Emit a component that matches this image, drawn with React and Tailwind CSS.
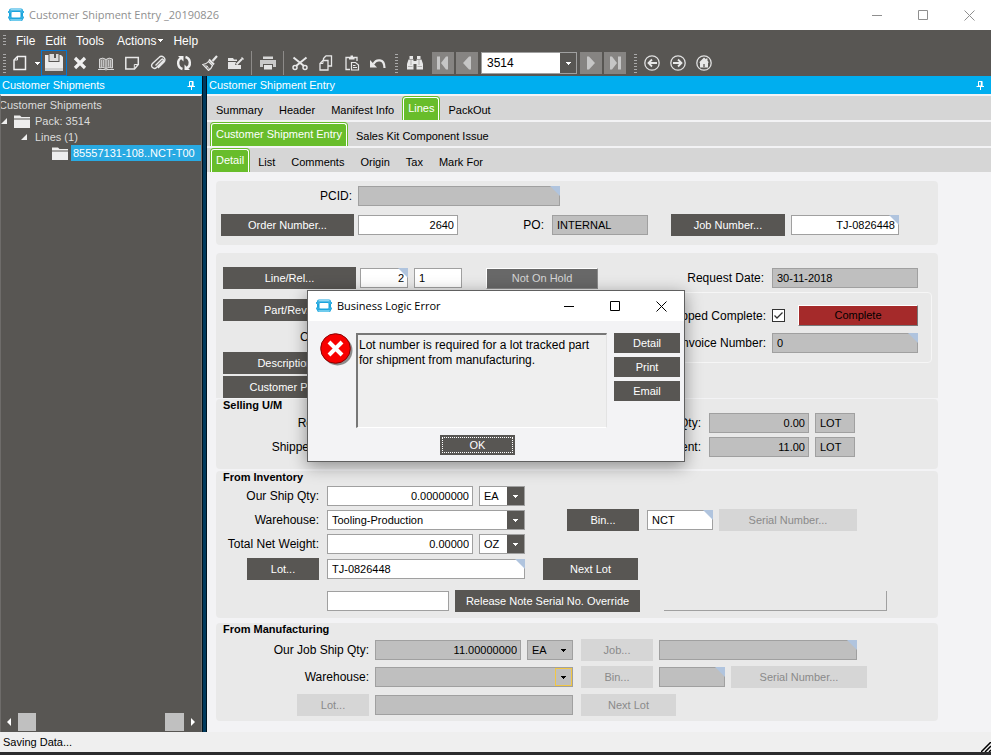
import { useState } from "react"

const topTabs = ["Summary", "Header", "Manifest Info", "Lines", "PackOut"]
const lineTabs = ["Customer Shipment Entry", "Sales Kit Component Issue"]
const detailTabs = ["Detail", "List", "Comments", "Origin", "Tax", "Mark For"]

/* ---------- icons ---------- */

function Svg({ size = 16, className = "", children }) {
  return (
    <svg width={size} height={size} viewBox={`0 0 ${size} ${size}`} fill="none" className={className} aria-hidden="true">
      {children}
    </svg>
  )
}

function AppLogo() {
  return (
    <Svg className="shrink-0">
      <rect x="1" y="1.500" width="14" height="12.500" rx="2" fill="#1ba4dd" />
      <path d="M3 1.500h10l1 2H2z" fill="#8fd6f2" />
      <path d="M3 14h10l1-2H2z" fill="#6fcbed" />
      <path d="M0 4h4v2H0zM12 4h4v2h-4zM0 9.500h4v2H0zM12 9.500h4v2h-4z" fill="#35b0e2" />
      <rect x="3.500" y="5" width="9" height="5.500" rx="1" fill="#fff" />
    </Svg>
  )
}

const Minimize = () => <Svg size={11}><path d="M0 5.500h10" stroke="currentColor" /></Svg>
const Maximize = () => <Svg size={11}><path d="M.5.5h9v9h-9z" stroke="currentColor" /></Svg>
const CloseX = () => <Svg size={11}><path d="M.5.5l10 10M10.500.5l-10 10" stroke="currentColor" /></Svg>
const Pin = () => (
  <Svg size={9}>
    <path d="M2.500.5h3.500v4.500h-3.500zM.5 5.500h7.500M4.500 6v3" stroke="#fff" />
    <path d="M5.500 0v5" stroke="#fff" strokeWidth="1.500" />
  </Svg>
)
const Caret = ({ className = "" }) => (
  <svg width="5" height="3" viewBox="0 0 5 3" shapeRendering="crispEdges" className={className} aria-hidden="true">
    <path d="M0 0h5v1H4v1H3v1H2V2H1V1H0z" fill="currentColor" />
  </svg>
)

const NewDoc = () => <Svg><path d="M5.500 1.500h8v13H2V5z" stroke="#f0f0f0" strokeWidth="1.500" /><path d="M2 5h3.500V1.500" stroke="#f0f0f0" /></Svg>
const Save = () => (
  <Svg size={18}>
    <path d="M0 1h3.500v7h11V1H16l2 2v14H0z" fill="#ececec" />
    <path d="M4.500 0h9v7h-9z" fill="#dcdcdc" />
    <path d="M9 0h2v4H9z" fill="#585653" />
    <path d="M0 14h18v3H0z" fill="#cfcfcf" />
  </Svg>
)
const Delete = () => <Svg><path d="M3 3l10 10M13 3L3 13" stroke="#f0f0f0" strokeWidth="3.200" /></Svg>
const Book = () => (
  <Svg>
    <path d="M1.500 4Q5 2 8 4.500 11 2 14.500 4v9Q11 11.500 8 13.500 5 11.500 1.500 13z" fill="#8d8b89" stroke="#d8d8d8" />
    <path d="M8 4.500v9M0 14.500h7l1 .5 1-.5h7" stroke="#d8d8d8" />
    <path d="M3.500 5v7M5.500 5v6.500M10.500 5v6.500M12.500 5v7" stroke="#c4c4c4" />
  </Svg>
)
const Note = () => <Svg><path d="M1.800 2.500h12.500v7L10.500 14H1.800z" stroke="#e8e8e8" strokeWidth="1.500" /><path d="M14.300 9.500h-4V14" stroke="#e8e8e8" /></Svg>
const Clip = () => (
  <Svg>
    <path d="M5.500 10.500l6-6c1.200-1 2.500.2 1.500 1.500l-6.500 6.500C4 15-.3 11.500 2.500 8.500L9 2.500C12-.5 17 3.500 14 7l-6 6" stroke="#e8e8e8" strokeWidth="1.400" />
  </Svg>
)
const Refresh = () => (
  <Svg>
    <path d="M6.500 14C1 12.500 1 5 5 3M9.500 2C15 3.500 15 11 11 13" stroke="#f0f0f0" strokeWidth="2.400" />
    <path d="M2 1h5.500v5.500zM14 15H8.500V9.500z" fill="#f0f0f0" />
  </Svg>
)
const Broom = () => (
  <Svg>
    <path d="M15 1l-4.500 5" stroke="#e8e8e8" strokeWidth="2.200" />
    <path d="M7 4.500l5 5" stroke="#e8e8e8" strokeWidth="2" />
    <path d="M6.500 6.500l4 4C9.500 13 8.500 14.500 6.500 15.500L.8 9.500C3 9 5 8.500 6.500 6.500z" stroke="#e8e8e8" strokeWidth="1.200" />
    <path d="M3 9.500l4.500 4.500M4 12.500l2-1.500" stroke="#e8e8e8" />
  </Svg>
)
const FolderEdit = () => (
  <Svg>
    <path d="M0 3h5l1 1.500h3V6H0zM0 7h8l-1 3h6v4H0z" fill="#e4e4e4" />
    <path d="M8.500 9.500L14 4" stroke="#e4e4e4" strokeWidth="2" />
    <path d="M14 2l2 2-1 1-2-2z" fill="#e4e4e4" />
  </Svg>
)
const Print = () => (
  <Svg>
    <path d="M3 1.500h10V4H3z" fill="#d8d8d8" />
    <path d="M0 5h16v7h-3V9H3v3H0z" fill="#c9c9c9" />
    <path d="M4 10h8v4.500H4z" fill="#e4e4e4" />
  </Svg>
)
const Cut = () => (
  <Svg>
    <path d="M1.500 2.500L12 11M14.500 2.500L4 11" stroke="#e8e8e8" strokeWidth="2" />
    <circle cx="3" cy="12.500" r="2" stroke="#e8e8e8" strokeWidth="1.500" />
    <circle cx="13" cy="12.500" r="2" stroke="#e8e8e8" strokeWidth="1.500" />
  </Svg>
)
const Copy = () => (
  <Svg>
    <path d="M8 .8h5.500V11H10M8 .8L5.500 3.500V5" stroke="#e8e8e8" strokeWidth="1.300" />
    <path d="M5 5.500h5v9.500H2V8.500z" stroke="#e8e8e8" strokeWidth="1.300" />
    <path d="M5 5.500v3H2" stroke="#e8e8e8" />
  </Svg>
)
const Paste = () => (
  <Svg>
    <path d="M6 14.500H2V2.500h11V6" stroke="#e8e8e8" strokeWidth="1.300" />
    <path d="M5 2h1.500V.5h2.500V2H10.500v2.500H5z" fill="#e8e8e8" />
    <path d="M7.500 7.500h4L14.500 10v5h-7z" stroke="#e8e8e8" strokeWidth="1.200" />
    <path d="M9 10.500h2.500M9 12.500h4" stroke="#e8e8e8" />
  </Svg>
)
const Undo = () => (
  <Svg>
    <path d="M3.500 9C6 4 14.500 3 14.500 13" stroke="#e8e8e8" strokeWidth="2.200" />
    <path d="M0 5v7.500h7z" fill="#e8e8e8" />
  </Svg>
)
const Binoculars = () => (
  <Svg>
    <path d="M2.500 1H6v3H2.500zM10 1h3.500v3H10zM1.500 4.500h5V6h3V4.500h5L16 9v5.500H9.500V9h-3v5.500H0V9z" fill="#e8e8e8" />
    <path d="M1 11.500h4.500M10.500 11.500H15M4 5v5M12 5v5" stroke="#b4b2b0" />
  </Svg>
)
const First = () => <Svg><path d="M2 1.500h3v13H2zM13 1.500v13h-2L6 8l5-6.500z" fill="#c6c6c6" /></Svg>
const Prev = () => <Svg><path d="M12 1.500v13h-2L4 8l6-6.500z" fill="#c6c6c6" /></Svg>
const Next = () => <Svg><path d="M4 1.500v13h2L12 8 6 1.500z" fill="#c6c6c6" /></Svg>
const Last = () => <Svg><path d="M11 1.500h3v13h-3zM3 1.500v13h2L10 8 5 1.500z" fill="#c6c6c6" /></Svg>
const Back = () => (
  <Svg><circle cx="8" cy="8" r="7.200" stroke="#e0e0e0" strokeWidth="1.300" /><path d="M13 8H5M8 4.500L4.500 8 8 11.500" stroke="#e8e8e8" strokeWidth="1.800" /></Svg>
)
const Forward = () => (
  <Svg><circle cx="8" cy="8" r="7.200" stroke="#e0e0e0" strokeWidth="1.300" /><path d="M3 8h8M8 4.500L11.500 8 8 11.500" stroke="#e8e8e8" strokeWidth="1.800" /></Svg>
)
const Home = () => (
  <Svg>
    <circle cx="8" cy="8" r="7.200" stroke="#e0e0e0" strokeWidth="1.300" />
    <path d="M8 2.500l2 1.800V3.500h1.500v2.300L13 7.500h-1V12.500H4V7.500H3z" fill="#e8e8e8" />
    <path d="M7 9h2v3.500H7z" fill="#8d8b89" />
  </Svg>
)
const Folder = () => (
  <svg width="16" height="13" viewBox="0 0 16 13" className="shrink-0" aria-hidden="true">
    <path d="M0 .5h6l1.500 1.500H16v1.500H0zM0 4.500h16V13H0z" fill="#eee" />
  </svg>
)
const TreeArrow = () => (
  <svg width="6" height="6" viewBox="0 0 6 6" className="shrink-0" aria-hidden="true">
    <path d="M6 0v6H0z" fill="#eee" />
  </svg>
)
const ErrorIcon = () => (
  <Svg size={33} className="shrink-0">
    <circle cx="17.500" cy="17.500" r="15" fill="#8c8c8c" />
    <circle cx="15.500" cy="15.500" r="14.800" fill="#f80000" stroke="#8a0000" />
    <path d="M9 9l13 13M22 9L9 22" stroke="#fff" strokeWidth="4" />
  </Svg>
)

/* ---------- form pieces ---------- */

function Grip({ className = "" }) {
  return <span className={`h-[19px] w-[3px] shrink-0 bg-[repeating-linear-gradient(#aaa_0_1px,#585653_1px_3px)] ${className}`} />
}

function ToolButton({ label, active, children }) {
  return (
    <button
      aria-label={label}
      className={`flex h-[26px] w-[26px] shrink-0 items-center justify-center ${active ? "border border-[#0078d7]" : ""}`}
    >
      {children}
    </button>
  )
}

function NavButton({ label, children }) {
  return (
    <button aria-label={label} className="flex size-[22px] shrink-0 items-center justify-center bg-[#868482]">
      {children}
    </button>
  )
}

function Label({ htmlFor, className = "", children }) {
  return (
    <label htmlFor={htmlFor} className={`shrink-0 text-right text-[12px] leading-5 whitespace-nowrap ${className}`}>
      {children}
    </label>
  )
}

function Field({ id, label, value = "", right, locked, lookup, className = "" }) {
  return (
    <div className={`relative h-5 shrink-0 ${className}`}>
      <input
        id={id}
        aria-label={label}
        defaultValue={value}
        readOnly={locked}
        className={`block h-full w-full rounded-none border border-[#a0a0a0] px-[3px] text-[11px] outline-none ${right ? "text-right" : "pl-1"} ${locked ? "bg-[#bfbfbf]" : "bg-white"}`}
      />
      {lookup && (
        <span className="pointer-events-none absolute top-0 right-0 size-0 border-t-[10px] border-l-[10px] border-t-[#b0c4de] border-l-transparent" />
      )}
    </div>
  )
}

function Select({ id, label, value = "", locked, focused, className = "" }) {
  const arrow = locked ? "bg-[#bfbfbf] text-black" : "bg-[#585653] text-white"
  return (
    <div className={`relative h-5 shrink-0 ${className}`}>
      <select
        id={id}
        aria-label={label}
        className={`block h-full w-full appearance-none rounded-none border border-[#a0a0a0] pr-4 pl-1 text-[11px] outline-none ${locked ? "bg-[#bfbfbf]" : "bg-white"}`}
      >
        <option>{value}</option>
      </select>
      <span
        className={`pointer-events-none absolute inset-y-px right-px flex w-[17px] items-center justify-center ${arrow} ${focused ? "border border-[#f2c744]" : ""}`}
      >
        <Caret />
      </span>
    </div>
  )
}

function Button({ disabled, className = "", children }) {
  return (
    <button
      disabled={disabled}
      className={`h-[22px] shrink-0 text-center text-[11px] whitespace-nowrap ${disabled ? "bg-[#d6d6d6] text-[#8a8a8a]" : "bg-[#585653] text-white"} ${className}`}
    >
      {children}
    </button>
  )
}

function Panel({ title, className = "", children }) {
  return (
    <section className={`rounded-[4px] bg-[#e9e9e9] ${className}`}>
      {title && <h2 className="pl-[7px] text-[11px] leading-[13px] font-bold">{title}</h2>}
      {children}
    </section>
  )
}

function TabRow({ tabs, initial, className = "" }) {
  const [active, setActive] = useState(initial)
  return (
    <div role="tablist" className={`mt-0.5 flex h-6 shrink-0 items-end bg-[#d6d6d6] text-[11px] whitespace-nowrap ${className}`}>
      {tabs.map((tab) =>
        tab === active ? (
          <button
            key={tab}
            role="tab"
            aria-selected="true"
            className="h-6 rounded-t-[4px] border border-b-0 border-[#68bd2b] bg-[#68bd2b] text-white"
          >
            <span className="block h-full rounded-t-[3px] border border-b-0 border-white px-1 leading-[21px]">{tab}</span>
          </button>
        ) : (
          <button key={tab} role="tab" aria-selected="false" onClick={() => setActive(tab)} className="h-6 px-2 pt-1">
            {tab}
          </button>
        )
      )}
    </div>
  )
}

/* ---------- page parts ---------- */

function TitleBar() {
  return (
    <header className="flex h-[30px] shrink-0 items-center bg-white pl-2 font-['Open_Sans','Noto_Sans',sans-serif] text-[11px] text-[#8f8f8f]">
      <AppLogo />
      <h1 className="ml-[5px] whitespace-nowrap">Customer Shipment Entry _20190826</h1>
      <div className="ml-auto flex items-center gap-[35px] pr-4">
        <button aria-label="Minimize"><Minimize /></button>
        <button aria-label="Maximize"><Maximize /></button>
        <button aria-label="Close"><CloseX /></button>
      </div>
    </header>
  )
}

function Toolbar() {
  return (
    <div className="shrink-0 bg-[#585653] text-white">
      <nav className="flex h-5 items-center gap-2.5 pt-px pl-[3px] text-[12px]">
        <span className="h-3 w-[3px] bg-[repeating-linear-gradient(#aaa_0_1px,#585653_1px_3px)]" />
        <button>File</button>
        <button>Edit</button>
        <button>Tools</button>
        <button className="ml-[3px] flex items-center gap-0.5">Actions<Caret /></button>
        <button>Help</button>
      </nav>
      <div className="flex h-[26px] items-center">
        <Grip className="ml-[3px]" />
        <span className="w-px shrink-0" />
        <ToolButton label="New"><NewDoc /></ToolButton>
        <button aria-label="New options" className="flex w-2 justify-center"><Caret /></button>
        <ToolButton label="Save" active><Save /></ToolButton>
        <ToolButton label="Delete"><Delete /></ToolButton>
        <ToolButton label="Book"><Book /></ToolButton>
        <ToolButton label="Memo"><Note /></ToolButton>
        <ToolButton label="Attachments"><Clip /></ToolButton>
        <ToolButton label="Refresh"><Refresh /></ToolButton>
        <ToolButton label="Clear"><Broom /></ToolButton>
        <ToolButton label="Edit list"><FolderEdit /></ToolButton>
        <span className="mr-[3px] ml-[2px] h-6 w-px shrink-0 bg-[#8d8b89]" />
        <ToolButton label="Print"><Print /></ToolButton>
        <span className="mr-[3px] ml-[2px] h-6 w-px shrink-0 bg-[#8d8b89]" />
        <ToolButton label="Cut"><Cut /></ToolButton>
        <ToolButton label="Copy"><Copy /></ToolButton>
        <ToolButton label="Paste"><Paste /></ToolButton>
        <ToolButton label="Undo"><Undo /></ToolButton>
        <Grip className="mr-1 ml-1" />
        <ToolButton label="Search"><Binoculars /></ToolButton>
        <div className="ml-1 flex items-center gap-0.5">
          <NavButton label="First"><First /></NavButton>
          <NavButton label="Previous"><Prev /></NavButton>
          <div className="relative mx-px h-[22px] w-24 text-black">
            <select aria-label="Pack" className="block h-full w-full appearance-none border border-[#a0a0a0] bg-white pl-[5px] text-[12px] outline-none">
              <option>3514</option>
            </select>
            <span className="pointer-events-none absolute inset-y-px right-px flex w-4 items-center justify-center bg-[#585653] text-white">
              <Caret />
            </span>
          </div>
          <NavButton label="Next"><Next /></NavButton>
          <NavButton label="Last"><Last /></NavButton>
        </div>
        <Grip className="mr-[2px] ml-2" />
        <ToolButton label="Back"><Back /></ToolButton>
        <ToolButton label="Forward"><Forward /></ToolButton>
        <ToolButton label="Home"><Home /></ToolButton>
      </div>
    </div>
  )
}

function Caption({ children }) {
  return (
    <div className="flex h-[18px] shrink-0 items-center justify-between bg-[#00aeef] pr-1.5 pl-0.5 text-[11px] text-white">
      <span>{children}</span>
      <Pin />
    </div>
  )
}

function Sidebar() {
  return (
    <aside className="flex w-[202px] shrink-0 flex-col bg-[#585653]">
      <Caption>Customer Shipments</Caption>
      <div className="flex min-h-0 flex-1 flex-col overflow-hidden border-t-2 border-r border-l border-t-[#f3f3f5] border-r-[#6e6c6a] border-l-[#6e6c6a] text-[11px] leading-4 text-[#dcdcdc]">
        <div className="-ml-0.5 pt-px whitespace-nowrap">Customer Shipments</div>
        <div className="flex items-center"><TreeArrow /><span className="w-[7px]" /><Folder /><span className="ml-[5px]">Pack: 3514</span></div>
        <div className="flex items-center gap-2 pl-5"><TreeArrow />Lines (1)</div>
        <div className="flex items-center gap-[3px] pl-[51px]">
          <Folder />
          <span className="flex-1 bg-[#29aae3] pl-0.5 whitespace-nowrap text-white">85557131-108..NCT-T00</span>
        </div>
        <div className="mt-auto mb-px flex h-[18px] items-center text-white">
          <svg width="4" height="8" viewBox="0 0 4 8" className="ml-1.5" aria-hidden="true"><path d="M4 0v8L0 4z" fill="#fff" /></svg>
          <span className="ml-[7px] h-full w-[18px] bg-[#c0c0c0]" />
          <span className="ml-auto h-full w-[19px] bg-[#c0c0c0]" />
          <svg width="4" height="8" viewBox="0 0 4 8" className="mr-1.5 ml-[7px]" aria-hidden="true"><path d="M0 0v8l4-4z" fill="#fff" /></svg>
        </div>
      </div>
    </aside>
  )
}

function OrderPanel() {
  return (
    <Panel className="mt-[9px] px-[5px] pt-[5px] pb-[9px]">
      <div className="flex items-center">
        <Label htmlFor="pcid" className="mr-1.5 w-[131px]">PCID:</Label>
        <Field id="pcid" locked lookup className="w-[202px]" />
      </div>
      <div className="mt-2 flex items-center">
        <Button className="w-[133px]">Order Number...</Button>
        <Field label="Order number" value="2640" right className="ml-1 w-[100px]" />
        <Label htmlFor="po" className="mr-2 w-[86px]">PO:</Label>
        <Field id="po" value="INTERNAL" locked className="w-24" />
        <Button className="ml-[23px] w-[114px]">Job Number...</Button>
        <Field label="Job number" value="TJ-0826448" right lookup className="ml-1.5 w-[108px]" />
      </div>
    </Panel>
  )
}

function LinePanel() {
  return (
    <Panel className="mt-2 rounded-b-none pt-[14px] pl-[7px]">
      <div className="flex items-center">
        <Button className="w-[133px]">Line/Rel...</Button>
        <Field label="Line" value="2" right lookup className="ml-1 w-12" />
        <Field label="Release" value="1" className="ml-1.5 w-12" />
        <button className="ml-6 h-[21px] w-28 border border-t-white border-r-[#8a8a8a] border-b-[#8a8a8a] border-l-white bg-[#686868] text-[11px] text-[#d6d6d6]">
          Not On Hold
        </button>
        <Label htmlFor="reqDate" className="mr-2 w-[166px]">Request Date:</Label>
        <Field id="reqDate" value="30-11-2018" locked className="w-[146px]" />
      </div>
      <div className="flex items-start">
        <div className="flex w-[133px] shrink-0 flex-col pt-2.5">
          <Button>Part/Rev...</Button>
          <Label className="mt-1.5 mb-[5px] pr-1">Currency:</Label>
          <Button>Description...</Button>
          <Button className="mt-0.5">Customer Part...</Button>
        </div>
        <fieldset className="mt-[3px] mr-1.5 ml-auto w-[320px] rounded-[4px] border border-[#f6f6f6] pt-3 pb-[9px]">
          <div className="flex items-center">
            <Label htmlFor="shipped" className="mr-1.5 w-[153px]">Shipped Complete:</Label>
            <span className="relative size-[13px] shrink-0">
              <input id="shipped" type="checkbox" defaultChecked className="peer block size-[13px] appearance-none border border-[#333] bg-white" />
              <svg width="13" height="13" viewBox="0 0 13 13" fill="none" className="pointer-events-none absolute inset-0 hidden peer-checked:block" aria-hidden="true">
                <path d="M2.500 6.500L5 9l5.500-5.500" stroke="#333" strokeWidth="1.300" />
              </svg>
            </span>
            <button className="ml-[13px] h-[21px] w-[120px] border border-t-white border-r-[#777] border-b-[#777] border-l-white bg-[#a52a2a] text-[11px] text-black">
              Complete
            </button>
          </div>
          <div className="mt-[7px] flex items-center">
            <Label htmlFor="invoice" className="mr-1.5 w-[153px]">Invoice Number:</Label>
            <Field id="invoice" value="0" locked lookup className="w-[146px]" />
          </div>
        </fieldset>
      </div>
    </Panel>
  )
}

function SellingPanel() {
  return (
    <Panel title="Selling U/M" className="mt-px pb-3">
      <div className="mt-px flex items-center">
        <Label className="w-[129px]">Req Qty:</Label>
        <Label htmlFor="remQty" className="mr-2 w-[356px]">Remaining Qty:</Label>
        <Field id="remQty" value="0.00" right locked className="w-[100px]" />
        <Field label="Remaining unit" value="LOT" locked className="ml-1.5 w-10" />
      </div>
      <div className="mt-1 flex items-center">
        <Label className="w-[129px] pr-1">Shipped Qty:</Label>
        <Label htmlFor="thisShip" className="mr-2 w-[356px]">This Shipment:</Label>
        <Field id="thisShip" value="11.00" right locked className="w-[100px]" />
        <Field label="Shipment unit" value="LOT" locked className="ml-1.5 w-10" />
      </div>
    </Panel>
  )
}

function InventoryPanel() {
  return (
    <Panel title="From Inventory" className="mt-0.5 pb-1.5">
      <div className="mt-0.5 flex items-center">
        <Label htmlFor="shipQty" className="mr-2 w-[103px]">Our Ship Qty:</Label>
        <Field id="shipQty" value="0.00000000" right className="w-[146px]" />
        <Select label="Ship unit" value="EA" className="ml-1.5 w-[46px]" />
      </div>
      <div className="mt-1 flex h-5 items-center">
        <Label htmlFor="invWh" className="mr-2 w-[103px]">Warehouse:</Label>
        <Select id="invWh" value="Tooling-Production" className="w-[198px]" />
        <Button className="ml-[42px] w-[72px]">Bin...</Button>
        <Field label="Bin" value="NCT" lookup className="ml-2 w-[66px]" />
        <Button disabled className="ml-1.5 w-[138px]">Serial Number...</Button>
      </div>
      <div className="mt-1 flex items-center">
        <Label htmlFor="netWeight" className="mr-2 w-[103px]">Total Net Weight:</Label>
        <Field id="netWeight" value="0.00000" right className="w-[146px]" />
        <Select label="Weight unit" value="OZ" className="ml-1.5 w-[46px]" />
      </div>
      <div className="mt-1 flex items-center pl-[31px]">
        <Button className="w-[72px]">Lot...</Button>
        <Field label="Lot" value="TJ-0826448" lookup className="ml-2 w-[198px]" />
        <Button className="ml-[18px] w-[95px]">Next Lot</Button>
      </div>
      <div className="mt-2.5 flex items-center pl-[111px]">
        <Field label="Release note serial" className="w-[122px]" />
        <Button className="ml-1.5 w-[185px]">Release Note Serial No. Override</Button>
        <div className="ml-6 h-5 w-[223px] border-r border-b border-[#a0a0a0]" />
      </div>
    </Panel>
  )
}

function ManufacturingPanel() {
  return (
    <Panel title="From Manufacturing" className="mt-[5px] pb-[5px]">
      <div className="mt-[3px] flex items-center">
        <Label htmlFor="jobQty" className="mr-1.5 w-[153px]">Our Job Ship Qty:</Label>
        <Field id="jobQty" value="11.00000000" right locked className="w-[146px]" />
        <Select label="Job unit" value="EA" locked className="ml-1.5 w-[46px]" />
        <Button disabled className="ml-2 w-[72px]">Job...</Button>
        <Field label="Job" locked lookup className="ml-1.5 w-[198px]" />
      </div>
      <div className="mt-[5px] flex items-center">
        <Label htmlFor="mfgWh" className="mr-1.5 w-[153px]">Warehouse:</Label>
        <Select id="mfgWh" locked focused className="w-[198px]" />
        <Button disabled className="ml-2 w-[72px]">Bin...</Button>
        <Field label="Manufacturing bin" locked lookup className="ml-1.5 w-[66px]" />
        <Button disabled className="ml-1.5 w-[136px]">Serial Number...</Button>
      </div>
      <div className="mt-1.5 flex items-center pl-[81px]">
        <Button disabled className="w-[72px]">Lot...</Button>
        <Field label="Manufacturing lot" locked className="ml-1.5 w-[198px]" />
        <Button disabled className="ml-2 w-[95px]">Next Lot</Button>
      </div>
    </Panel>
  )
}

function ErrorDialog() {
  return (
    <div
      role="alertdialog"
      aria-label="Business Logic Error"
      className="absolute top-[290px] left-[307px] w-[378px] border border-[#606060] bg-[#f3f3f5] pb-1.5 shadow-[0_4px_16px_rgba(0,0,0,0.4)]"
    >
      <div className="flex h-[30px] items-center bg-white pl-2 font-['Open_Sans','Noto_Sans',sans-serif] text-[11px]">
        <AppLogo />
        <span className="ml-[5px]">Business Logic Error</span>
        <div className="ml-auto flex items-center gap-[35px] pr-[17px]">
          <button aria-label="Minimize"><Minimize /></button>
          <button aria-label="Maximize"><Maximize /></button>
          <button aria-label="Close"><CloseX /></button>
        </div>
      </div>
      <div className="flex items-start pt-3 pr-1 pl-3">
        <ErrorIcon />
        <p className="ml-[3px] h-[95px] flex-1 border border-t-2 border-l-2 border-t-[#777] border-r-[#e3e3e3] border-b-white border-l-[#777] bg-[#efefef] pt-[3px] pl-px text-[12px] leading-[15px]">
          Lot number is required for a lot tracked part for shipment from manufacturing.
        </p>
        <div className="ml-[7px] flex w-[66px] flex-col gap-1">
          <button className="h-5 bg-[#585653] text-[11px] text-white">Detail</button>
          <button className="h-5 bg-[#585653] text-[11px] text-white">Print</button>
          <button className="h-5 bg-[#585653] text-[11px] text-white">Email</button>
        </div>
      </div>
      <div className="mt-[7px] flex pl-[132px]">
        <button className="h-5 w-[75px] bg-[#585653] p-0.5 text-[11px] text-white">
          <span className="flex h-full items-center justify-center border border-dotted border-white">OK</span>
        </button>
      </div>
    </div>
  )
}

export default function App() {
  return (
    <div className="relative flex min-h-screen flex-col bg-[#f3f3f5] font-['Liberation_Sans',Arial,sans-serif] text-black">
      <TitleBar />
      <Toolbar />
      <div className="flex flex-1">
        <Sidebar />
        <div className="w-[5px] shrink-0 border-r border-l border-[#00131f] bg-[#003a5d]" />
        <main className="flex min-w-0 flex-1 flex-col">
          <Caption>Customer Shipment Entry</Caption>
          <TabRow tabs={topTabs} initial="Lines" className="pl-px" />
          <TabRow tabs={lineTabs} initial="Customer Shipment Entry" className="pl-[3px]" />
          <TabRow tabs={detailTabs} initial="Detail" className="pl-[3px]" />
          <div className="mr-[53px] ml-[9px] flex-1">
            <OrderPanel />
            <LinePanel />
            <SellingPanel />
            <InventoryPanel />
            <ManufacturingPanel />
          </div>
        </main>
      </div>
      <footer className="flex h-[23px] shrink-0 items-center justify-between border-b-[3px] border-[#2b2b2d] bg-[#efefef] pl-[3px] text-[11px]">
        <span>Saving Data...</span>
        <Svg size={10} className="self-end"><path d="M0 10L10 0M4 10l6-6M8 10l2-2" stroke="#000" strokeWidth="1.500" /></Svg>
      </footer>
      <ErrorDialog />
    </div>
  )
}
